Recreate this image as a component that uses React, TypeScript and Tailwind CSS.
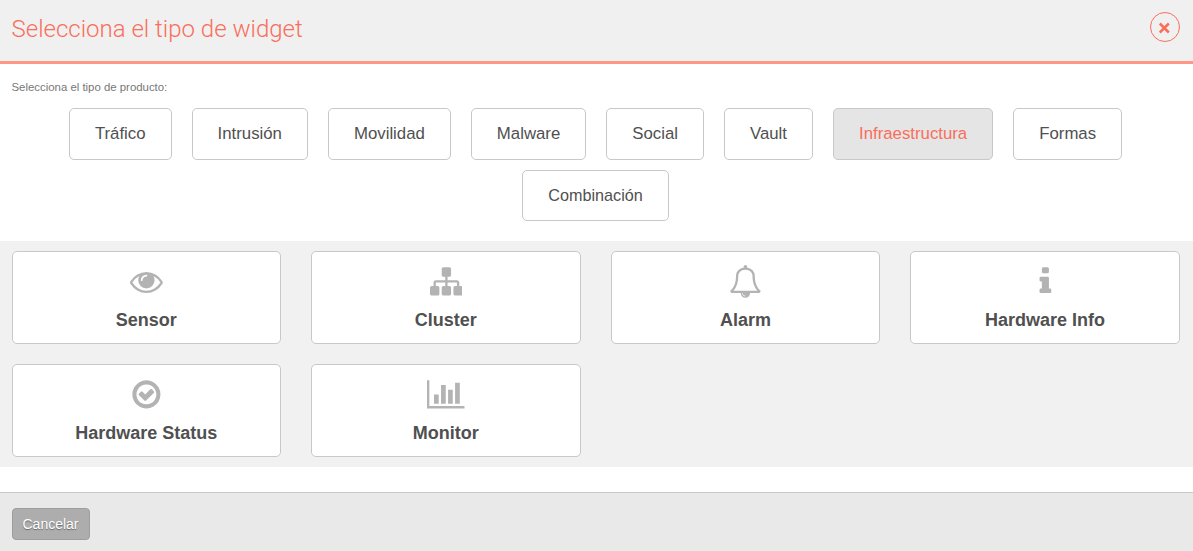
type Glyph = { d: string; w?: number };

const GLYPHS: Record<string, Glyph> = {
  eye: {
    d: 'M1664 960q-152-236-381-353 61 104 61 225 0 185-131.5 316.5t-316.5 131.5-316.5-131.5-131.5-316.5q0-121 61-225-229 117-381 353 133 205 333.5 326.5t434.5 121.5 434.5-121.5 333.5-326.5zm-720-384q0-20-14-34t-34-14q-125 0-214.5 89.5t-89.5 214.5q0 20 14 34t34 14 34-14 14-34q0-86 61-147t147-61q20 0 34-14t14-34zm848 384q0 34-20 69-140 230-376.5 368.5t-499.5 138.5-499.5-139-376.5-368q-20-35-20-69t20-69q140-229 376.5-368t499.5-139 499.5 139 376.5 368q20 35 20 69z',
  },
  sitemap: {
    d: 'M1792 1248v320q0 40-28 68t-68 28h-320q-40 0-68-28t-28-68v-320q0-40 28-68t68-28h96v-192h-512v192h96q40 0 68 28t28 68v320q0 40-28 68t-68 28h-320q-40 0-68-28t-28-68v-320q0-40 28-68t68-28h96v-192h-512v192h96q40 0 68 28t28 68v320q0 40-28 68t-68 28h-320q-40 0-68-28t-28-68v-320q0-40 28-68t68-28h96v-192q0-52 38-90t90-38h512v-192h-96q-40 0-68-28t-28-68v-320q0-40 28-68t68-28h320q40 0 68 28t28 68v320q0 40-28 68t-68 28h-96v192h512q52 0 90 38t38 90v192h96q40 0 68 28t28 68z',
  },
  bell: {
    d: 'M912 1696q0-16-16-16-59 0-101.5-42.5t-42.5-101.5q0-16-16-16t-16 16q0 73 51.5 124.5t124.5 51.5q16 0 16-16zm-666-288h1300q-266-300-266-832 0-51-24-105t-69-103-121.5-80.5-169.5-31.5-169.5 31.5-121.5 80.5-69 103-24 105q0 532-266 832zm1482 0q0 52-38 90t-90 38h-448q0 106-75 181t-181 75-181-75-75-181h-448q-52 0-90-38t-38-90q50-42 91-88t85-119.5 74.5-158.5 50-206 19.5-260q0-152 117-282.5t307-158.5q-8-19-8-39 0-40 28-68t68-28 68 28 28 68q0 20-8 39 190 28 307 158.5t117 282.5q0 139 19.5 260t50 206 74.5 158.5 85 119.5 91 88z',
  },
  info: {
    d: 'M1216 1344v128q0 26-19 45t-45 19h-512q-26 0-45-19t-19-45v-128q0-26 19-45t45-19h64v-384h-64q-26 0-45-19t-19-45v-128q0-26 19-45t45-19h384q26 0 45 19t19 45v576h64q26 0 45 19t19 45zm-128-1152v192q0 26-19 45t-45 19h-256q-26 0-45-19t-19-45v-192q0-26 19-45t45-19h256q26 0 45 19t19 45z',
  },
  check: {
    d: 'M1299 813l-422 422q-19 19-45 19t-45-19l-294-294q-19-19-19-45t19-45l102-102q19-19 45-19t45 19l147 147 275-275q19-19 45-19t45 19l102 102q19 19 19 45t-19 45zm141 83q0-148-73-273t-198-198-273-73-273 73-198 198-73 273 73 273 198 198 273 73 273-73 198-198 73-273zm224 0q0 209-103 385.5t-279.5 279.5-385.5 103-385.5-103-279.5-279.5-103-385.5 103-385.5 279.5-279.5 385.5-103 385.5 103 279.5 279.5 103 385.5z',
  },
  chart: {
    w: 2048,
    d: 'M640 896v512h-256v-512h256zm384-512v1024h-256v-1024h256zm1024 1152v128h-2048v-1536h128v1408h1920zm-640-896v768h-256v-768h256zm384-384v1152h-256v-1152h256z',
  },
};

function Icon({ name, className }: { name: string; className: string }) {
  const { d, w = 1792 } = GLYPHS[name];
  return (
    <svg viewBox={`0 0 ${w} 1792`} fill="currentColor" className={className} aria-hidden="true">
      <path d={d} />
    </svg>
  );
}

const PRODUCTS = ['Tráfico', 'Intrusión', 'Movilidad', 'Malware', 'Social', 'Vault', 'Infraestructura', 'Formas'];

const WIDGETS = [
  { icon: 'eye', label: 'Sensor' },
  { icon: 'sitemap', label: 'Cluster' },
  { icon: 'bell', label: 'Alarm' },
  { icon: 'info', label: 'Hardware Info' },
  { icon: 'check', label: 'Hardware Status' },
  { icon: 'chart', label: 'Monitor' },
];

export default function App() {
  return (
    <div className="flex h-[551px] w-full flex-col bg-white font-['Liberation_Sans',Arial,sans-serif] text-[#505050]">
      <header className="flex h-16 shrink-0 items-start justify-between border-b-3 border-[#ff9785] bg-[#f0f0f0] pr-[13px] pl-[11.5px] text-[#f96e5b]">
        <h1 className="mt-[11px] font-[Roboto,sans-serif] text-[24px] leading-9 font-light">Selecciona el tipo de widget</h1>
        <button aria-label="Cerrar" className="mt-3 flex size-[30px] items-center justify-center rounded-full border border-[#f96e5b]">
          <svg viewBox="0 0 12 12" className="mt-0.5 mr-0.5 size-3" fill="none" stroke="currentColor" strokeWidth="2.5" aria-hidden="true">
            <path d="M1.8 1.5l9 9M10.8 1.5l-9 9" />
          </svg>
        </button>
      </header>

      <section className="flex h-[177px] shrink-0 flex-col">
        <p className="mt-[14px] pl-[11.5px] text-[11.4px] leading-[18px] text-[#777]">Selecciona el tipo de producto:</p>
        <div className="mt-3 flex justify-center gap-5 pr-0.5 text-[16.8px]">
          {PRODUCTS.map((p) => (
            <button
              key={p}
              className={
                p === 'Infraestructura'
                  ? 'h-13 rounded-[5px] border border-[#c8c8c8] bg-[#e5e5e5] px-[25px] text-[#f96e5b]'
                  : 'h-13 rounded-[5px] border border-[#c8c8c8] bg-white px-[25px]'
              }
            >
              {p}
            </button>
          ))}
        </div>
        <div className="mt-2.5 flex justify-center pr-0.5 text-[16.2px]">
          <button className="h-[51px] rounded-[5px] border border-[#c8c8c8] bg-white px-[25px]">Combinación</button>
        </div>
      </section>

      <section className="grid h-[226px] shrink-0 auto-rows-[93px] grid-cols-4 gap-x-[30px] gap-y-5 bg-[#f1f1f1] py-2.5 pr-[13px] pl-[11.5px]">
        {WIDGETS.map(({ icon, label }) => (
          <button key={label} className="flex flex-col items-center rounded-[5px] border border-[#c8c8c8] bg-white pt-[13px]">
            <Icon name={icon} className="h-[32.8px] w-auto text-[#b3b3b3]" />
            <span className="mt-[10.2px] pr-[0.2px] text-[18px] leading-6 font-bold">{label}</span>
          </button>
        ))}
      </section>

      <footer className="mt-[25px] flex flex-1 items-start border-t border-[#c8c8c8] bg-[#e9e9e9] pl-3">
        <button className="mt-[15px] h-8 w-[78px] rounded-[4px] border border-[#9e9e9e] bg-[#adadad] pr-px text-[14px] text-white [text-shadow:0_1px_1px_rgba(0,0,0,0.4)]">
          Cancelar
        </button>
      </footer>
    </div>
  );
}
